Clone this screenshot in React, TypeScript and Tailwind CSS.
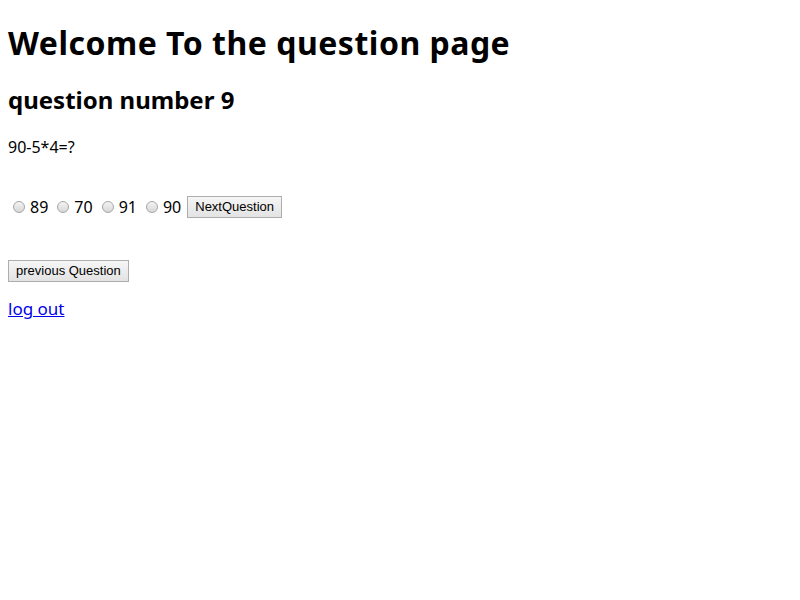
export default function App() {
  const options = ["89", "70", "91", "90"];
  return (
    <div className="min-h-screen bg-white px-2 font-['Noto_Sans',sans-serif] text-black">
      <h1 className="pt-[22px] text-[32px] font-bold leading-[42px] tracking-[0.5px]">Welcome To the question page</h1>
      <h2 className="mt-[20px] text-[24px] font-bold leading-[32px]">question number 9</h2>
      <p className="mt-[21px] text-[16px] leading-[21px]">90-5*4=?</p>

      {/* answers */}
      <div className="mt-[38px] flex items-center text-[16px] leading-[21px]">
        {options.map((o) => (
          <label key={o} className="mr-[4px] flex items-center">
            <span className="mx-[5px] inline-block h-[12px] w-[12px] rounded-full border border-[#a6a6a6] bg-gradient-to-b from-[#f4f4f4] to-[#d7d7d7]" />
            <span>{o}</span>
          </label>
        ))}
        <button className="ml-[2px] h-[22px] border border-[#adadad] bg-gradient-to-b from-[#f6f6f6] to-[#e3e3e3] px-[7px] font-['Liberation_Sans',sans-serif] text-[13px] leading-[20px]">
          NextQuestion
        </button>
      </div>

      <div className="mt-[39px]">
        <button className="h-[22px] border border-[#adadad] bg-gradient-to-b from-[#f6f6f6] to-[#e3e3e3] px-[7px] font-['Liberation_Sans',sans-serif] text-[13px] leading-[20px]">
          previous Question
        </button>
      </div>

      <p className="mt-[16px] text-[17px] leading-[22px]">
        <a href="#" className="text-[#0000ee] underline">log out</a>
      </p>
    </div>
  );
}
